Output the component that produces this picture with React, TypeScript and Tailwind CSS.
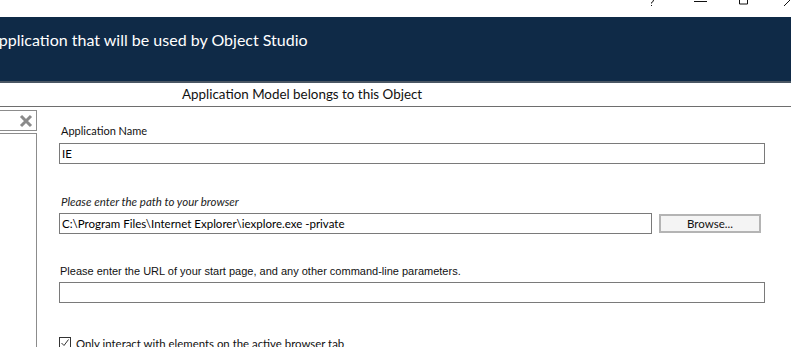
import React from 'react';

const ui = 'Lato, "Noto Sans", sans-serif';

function TitleButtons() {
  return (
    <svg className="absolute left-0 top-0" width="791" height="17" viewBox="0 0 791 17">
      <g fill="none" stroke="#111" strokeWidth="1">
        <path d="M650.5 -3 q3 0 3 3 q0 2 -2 2.5 v1" />
        <rect x="651" y="5" width="1" height="1" fill="#111" stroke="none" />
        <path d="M694 1.5 h13" />
        <path d="M739.5 -6 h8 v10 h-8 z" />
        <path d="M784 6 l8 -8" />
      </g>
    </svg>
  );
}

function Field({ value, className }: { value?: string; className: string }) {
  return (
    <div
      className={`h-[21px] border border-[#7a7a7a] bg-white flex items-center px-[2px] text-[11.5px] text-black ${className}`}
    >
      {value}
    </div>
  );
}

export default function App() {
  return (
    <div className="w-[791px] h-[347px] overflow-hidden bg-white relative" style={{ fontFamily: ui }}>
      <div className="h-[17px] relative">
        <TitleButtons />
      </div>
      <div className="h-[66px] bg-[#0f2a47] border-b-2 border-[#4a5663] flex items-start overflow-hidden">
        <div className="mt-[11px] -ml-[12px] text-[16px] text-white whitespace-nowrap">
          Application that will be used by Object Studio
        </div>
      </div>
      <div className="h-[24px] border-b border-[#6e6e6e] flex items-center pl-[182px] text-[13.4px] text-[#111]">
        Application Model belongs to this Object
      </div>
      <div className="flex">
        <div className="w-[37px] shrink-0 pt-[3px]">
          <div className="h-[21px] border border-[#8c8c8c] border-l-0 flex items-center justify-end pr-[3px]">
            <svg width="14" height="14" viewBox="0 0 14 14">
              <path d="M2 2 L12 12 M12 2 L2 12" stroke="#8a8a8a" strokeWidth="3" />
            </svg>
          </div>
          <div className="mt-[2px] h-[260px] border-t border-r border-[#8c8c8c]" />
        </div>
        <div className="flex-1 pl-[22px] pt-[16px] text-[11.5px] text-[#111]">
          <div className="leading-[16px] ml-[2px] text-[11px]">Application Name</div>
          <Field value="IE" className="mt-[4px] w-[706px]" />
          <div className="mt-[30px] leading-[16px] italic text-[#222] ml-[2px]">
            Please enter the path to your browser
          </div>
          <div className="mt-[3px] flex items-center gap-[7px]">
            <Field value="C:\Program Files\Internet Explorer\iexplore.exe -private" className="w-[593px]" />
            <button className="w-[102px] h-[19px] border-2 border-[#b4b4b4] bg-[#f4f4f4] text-[11.5px] text-[#111] flex items-center justify-center leading-none">
              Browse...
            </button>
          </div>
          <div
            className="mt-[30px] leading-[15px] ml-[1px] text-[11px] text-[#111]"
            style={{ fontFamily: '"Liberation Sans", Arial, sans-serif' }}
          >
            Please enter the URL of your start page, and any other command-line parameters.
          </div>
          <Field className="mt-[3px] w-[706px]" />
          <div className="mt-[34px] flex items-start gap-[5px]">
            <div className="w-[12px] h-[12px] border border-[#333] flex items-center justify-center bg-white">
              <svg width="10" height="10" viewBox="0 0 10 10">
                <path d="M1.5 5 L4 7.5 L8.5 1.5" fill="none" stroke="#333" strokeWidth="1" />
              </svg>
            </div>
            <span className="leading-[14px] text-[11.4px]">Only interact with elements on the active browser tab</span>
          </div>
        </div>
      </div>
    </div>
  );
}
